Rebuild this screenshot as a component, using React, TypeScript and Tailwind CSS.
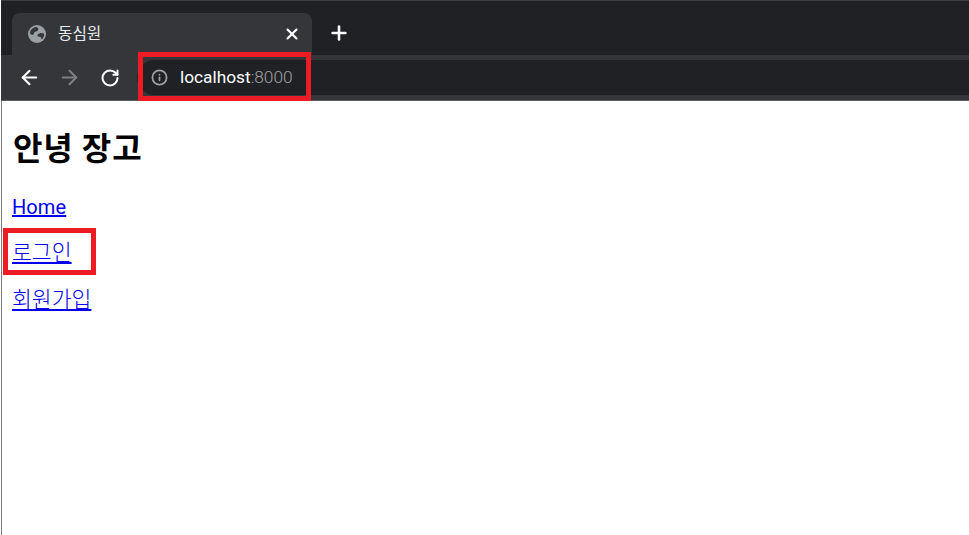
import React from 'react';
import { ArrowLeft, ArrowRight, Info, Plus, RotateCw, X } from 'lucide-react';

const GlobeIcon = () => (
  <svg width="18" height="18" viewBox="0 0 18 18">
    <circle cx="9" cy="9" r="9" fill="#9aa0a6" />
    <path d="M2.500 5.500C4 3.500 6 2.200 8.500 2l2 1.500-1 2.500-3 1-1 2.500-1.500.500-2-1.500z" fill="#35363a" />
    <path d="M9.500 9.500l3-1.500 3.500 .500c.3 2.500-.5 4.500-2.300 6l-1-2.500-3-.500z" fill="#35363a" />
  </svg>
);

export default function App() {
  return (
    <div className="relative h-[535px] w-[969px] overflow-hidden bg-white font-['Noto_Sans_CJK_KR',sans-serif]">
      <div className="ml-px flex h-[55px] items-end border-t border-[#3c3d40] bg-[#202124] pl-[11px]">
        <div className="flex h-[42px] w-[300px] items-center rounded-t-lg bg-[#35363a] pl-[16px] pr-[11px] text-[15.7px] text-[#e8eaed]">
          <GlobeIcon />
          <span className="mb-0.5 ml-[12px] flex-1">동심원</span>
          <X size={18} strokeWidth={2.8} className="text-white" />
        </div>
        <Plus size={22} strokeWidth={2.8} className="mb-[11px] ml-[16px] text-white" />
      </div>

      <div className="ml-px flex h-[46px] items-center border-b border-[#5f6063] bg-[#35363a] pl-[17px]">
        <ArrowLeft size={23} strokeWidth={2.2} className="text-white" />
        <ArrowRight size={23} strokeWidth={2.2} className="ml-[17px] text-[#7e7f82]" />
        <RotateCw size={20} strokeWidth={2.4} className="ml-[19px] text-white" />
        <div className="ml-[17px] flex h-[35px] flex-1 items-center rounded-l-full bg-[#202124] pl-[14px] font-['Roboto',sans-serif] text-[17.3px]">
          <Info size={17} strokeWidth={2.5} className="text-[#9aa0a6]" />
          <span className="ml-[12px] text-white">localhost</span>
          <span className="font-light text-[#a0a2a5]">:8000</span>
        </div>
      </div>

      <div className="ml-px h-[434px] border-l border-[#7a7a7a] pl-[10px] text-black">
        <h1 className="mb-[22px] pl-px pt-[21px] text-[32px] leading-[48px] font-bold tracking-[0.9px]">안녕 장고</h1>
        <div className="flex flex-col">
          <p className="font-['Roboto',sans-serif] text-[20px] leading-[30px] tracking-[0.1px]">
            <a href="#" className="text-[#0000ee] underline">
              Home
            </a>
          </p>
          <p className="mt-[14px] text-[21.6px] leading-[30px] font-light">
            <a href="#" className="text-[#0000ee] underline">
              로그인
            </a>
          </p>
          <p className="mt-[17px] text-[21.6px] leading-[30px] font-light">
            <a href="#" className="text-[#0000ee] underline">
              회원가입
            </a>
          </p>
        </div>
      </div>

      {/* annotation boxes drawn over the shot */}
      <div className="absolute left-[138px] top-[52px] h-[49px] w-[173px] border-[5px] border-[#ed1c24]" />
      <div className="absolute left-[3px] top-[228px] h-[47px] w-[93px] border-[5px] border-[#ed1c24]" />
    </div>
  );
}
